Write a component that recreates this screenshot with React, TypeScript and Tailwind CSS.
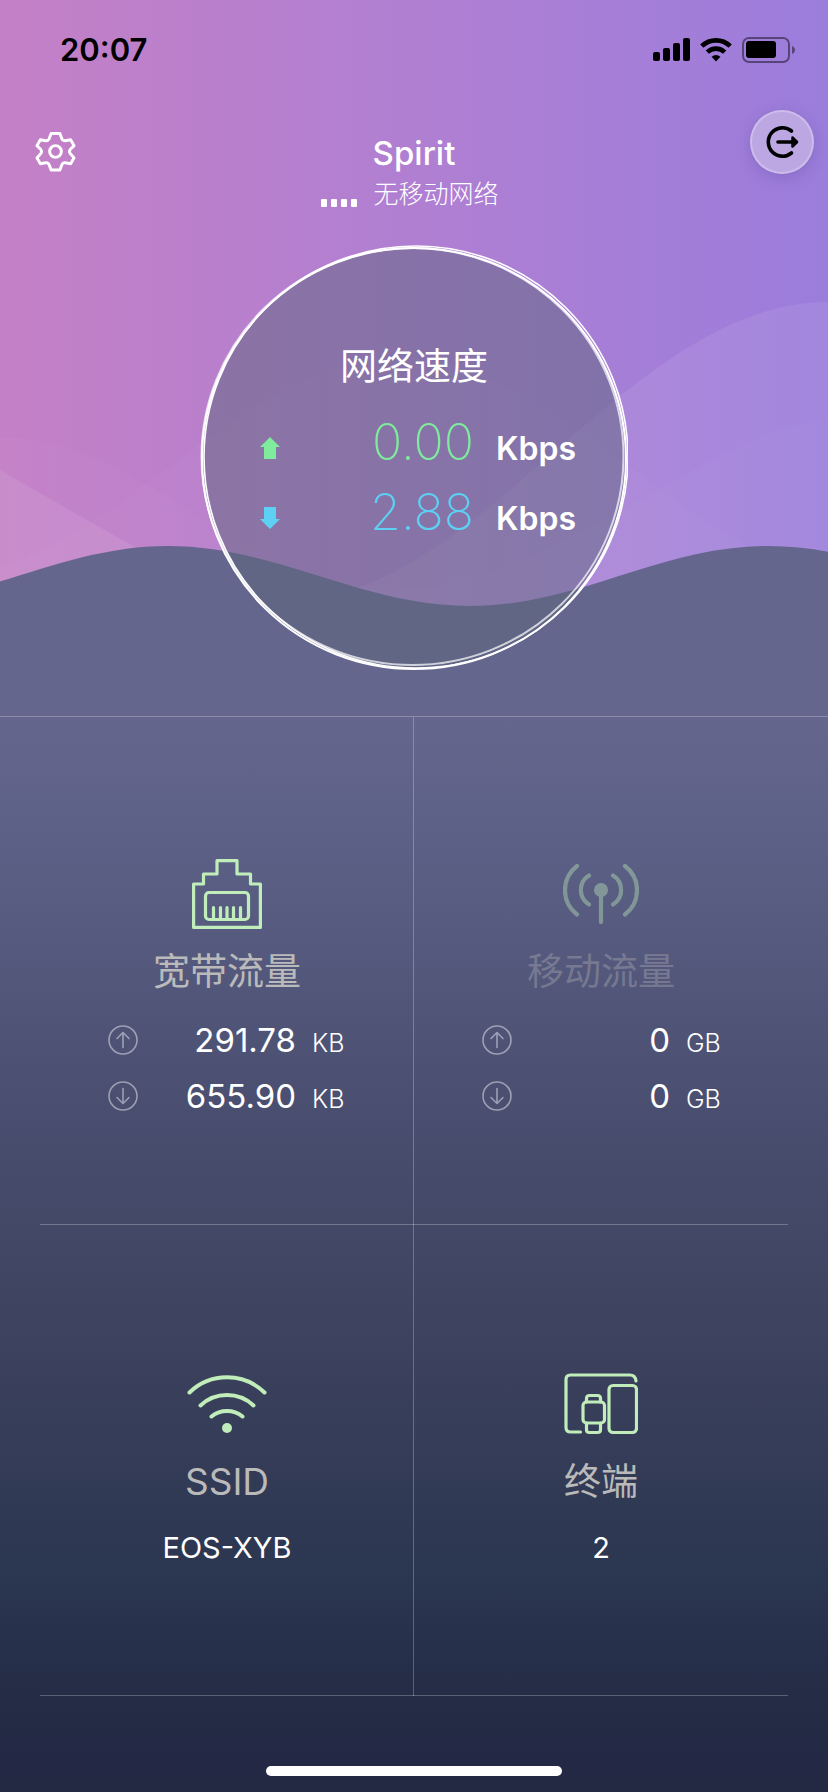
import { ReactNode } from "react";

const stroke = {
  fill: "none",
  stroke: "currentColor",
  strokeLinecap: "round" as const,
  strokeLinejoin: "round" as const,
};

function StatusBar() {
  return (
    <div className="flex h-[99px] items-center justify-between pr-8 pl-[60px] text-black">
      <span className="text-[31px] leading-10 font-semibold">20:07</span>
      <div className="flex items-center gap-[10px]">
        <svg width="37" height="24" viewBox="0 0 37 24" fill="currentColor">
          <rect x="0" y="14" width="7" height="9" rx="2" />
          <rect x="10" y="10" width="7" height="13" rx="2" />
          <rect x="20" y="5" width="7" height="18" rx="2" />
          <rect x="30" y="0" width="7" height="23" rx="2" />
        </svg>
        <svg width="32" height="24" viewBox="0 0 32 24" fill="none" stroke="currentColor" strokeWidth="4.6">
          <path d="M1.8 8.2a20.2 20.2 0 0 1 28.4 0" />
          <path d="M7.3 14.2a12.4 12.4 0 0 1 17.4 0" />
          <path d="M16 23.4l-4.4-4.6a6.2 6.2 0 0 1 8.8 0z" fill="currentColor" stroke="none" />
        </svg>
        <svg width="54" height="26" viewBox="0 0 54 26">
          <rect x="1" y="1" width="46" height="24" rx="6" fill="none" stroke="#000" strokeOpacity=".45" strokeWidth="2" />
          <rect x="4" y="4" width="30" height="17" rx="3" />
          <path d="M50 9c4 1.400 4 6.600 0 8z" fillOpacity=".45" />
        </svg>
      </div>
    </div>
  );
}

function Waves() {
  return (
    <svg className="absolute inset-0 h-full w-full" viewBox="0 0 828 716" preserveAspectRatio="none">
      <g fill="#fff">
        <path fillOpacity=".08" d="M0 470C45 496 90 522 135 547C190 576 240 600 290 600C480 600 628 302 828 302V716H0Z" />
        <path fillOpacity=".02" d="M0 437C142 437 248 590 390 590C560 590 714 419 840 419V716H0Z" />
        <path fillOpacity=".02" d="M-60 575C108 575 232 358 400 358C565 358 695 575 856 575V716H-60Z" />
      </g>
      <path
        d="M-132 606C-23 606 59 546 168 546S361 606 470 606S659 546 768 546S959 606 1068 606V716H-132Z"
        fill="#65668d"
      />
    </svg>
  );
}

function SpeedRow({ value, color, arrow }: { value: string; color: string; arrow: string }) {
  return (
    <div className={`flex h-[70px] items-baseline ${color}`}>
      <svg className="mt-3 self-center" width="20" height="22" viewBox="0 0 20 22" fill="currentColor">
        <path d={arrow} />
      </svg>
      <span className="flex-1 text-right text-[50px] leading-[70px] font-extralight">{value}</span>
      <span className="w-[102px] pl-[22px] text-[32px] font-semibold text-white">Kbps</span>
    </div>
  );
}

function SpeedDisc() {
  return (
    <div className="relative mx-auto size-[428px]">
      <svg className="absolute inset-0" width="428" height="428" viewBox="0 0 428 428" fill="none">
        <ellipse cx="213.500" cy="213.500" rx="212" ry="210" fill="#5d667d" fillOpacity=".5" />
        <g stroke="#fff">
          <ellipse cx="214" cy="214.500" rx="212" ry="210.500" strokeWidth="2" />
          <ellipse cx="212.500" cy="212.500" rx="211" ry="208.500" strokeWidth="2" strokeOpacity=".7" />
          <ellipse cx="216" cy="213" rx="212" ry="211" strokeWidth="1.600" />
        </g>
      </svg>
      <div className="relative pt-[97px]">
        <h2 className="text-center text-[37px] leading-[52px] font-normal text-white">网络速度</h2>
        <div className="mt-[14px] pr-[52px] pl-[60px]">
          <SpeedRow value="0.00" color="text-[#7eeb9d]" arrow="M10 0L20 10H16V22H4V10H0Z" />
          <SpeedRow value="2.88" color="text-[#5dd0f3]" arrow="M10 22L20 12H16V0H4V12H0Z" />
        </div>
      </div>
    </div>
  );
}

function UsageRow({ up, value, unit }: { up?: boolean; value: string; unit: string }) {
  return (
    <div className="flex h-14 items-baseline">
      <svg className="self-center text-white/45" width="30" height="30" viewBox="0 0 30 30" {...stroke} strokeWidth="1.600">
        <circle cx="15" cy="15" r="14" />
        <path d={up ? "M15 22.500V7.500M9 13.500L15 7.500L21 13.500" : "M15 7.500V22.500M9 16.500L15 22.500L21 16.500"} />
      </svg>
      <span className="flex-1 text-right text-[33px] leading-[56px]">{value}</span>
      <span className="w-[50px] pl-4 text-[25px] font-light">{unit}</span>
    </div>
  );
}

function Tile({ icon, title, dim, children }: { icon: ReactNode; title: string; dim?: boolean; children: ReactNode }) {
  return (
    <div className="flex flex-col items-center text-white">
      <div className={dim ? "flex h-[72px] items-center text-[#c0edb9] opacity-40" : "flex h-[72px] items-center text-[#c0edb9]"}>
        {icon}
      </div>
      <h3 className={dim ? "mt-4 text-[37px] leading-[52px] text-[#bababa]/35" : "mt-4 text-[37px] leading-[52px] text-[#bababa]"}>
        {title}
      </h3>
      {children}
    </div>
  );
}

const EthernetIcon = (
  <svg width="70" height="70" viewBox="0 0 70 70" {...stroke} strokeWidth="3.200">
    <path d="M1.600 68.400V25H11.500V15H25V1.600H45V15H58.500V25H68.400V68.400Z" />
    <rect x="13.500" y="33.500" width="43" height="27" rx="3.500" />
    <path d="M21.500 48.500V59M28.500 48.500V59M35 48.500V59M41.500 48.500V59M48.500 48.500V59" />
  </svg>
);

const AntennaIcon = (
  <svg width="76" height="60" viewBox="0 0 76 60" {...stroke} strokeWidth="4.200">
    <circle cx="38" cy="26" r="7" fill="currentColor" stroke="none" />
    <path d="M38 30V58M26 11.500A17 17 0 0 0 26 40.500M50 11.500A17 17 0 0 1 50 40.500M14 2A30.500 30.500 0 0 0 14 50.500M62 2A30.500 30.500 0 0 1 62 50.500" />
  </svg>
);

const WifiIcon = (
  <svg width="80" height="60" viewBox="0 0 80 60" {...stroke} strokeWidth="4">
    <path d="M2.500 18.500A54 54 0 0 1 77.500 18.500M13.500 31.500A39 39 0 0 1 66.500 31.500M24.500 42.500A25 25 0 0 1 55.500 42.500" />
    <circle cx="40" cy="54" r="5" fill="currentColor" stroke="none" />
  </svg>
);

const DevicesIcon = (
  <svg width="74" height="62" viewBox="0 0 74 62" {...stroke} strokeWidth="3.200">
    <path d="M72 8C71.500 4 69 2 66 2H6.500Q2 2 2 6.500V54.500Q2 59 6.500 59H16.500" />
    <rect x="45" y="12.500" width="27.500" height="47" rx="4" />
    <rect x="19" y="29" width="21.500" height="21" rx="3.500" />
    <path d="M22.500 29V25.500Q22.500 22.500 25.500 22.500H33.500Q36.500 22.500 36.500 25.500V29M22.500 50V57Q22.500 59.500 25.500 59.500H33.500Q36.500 59.500 36.500 57V50" />
  </svg>
);

export default function App() {
  return (
    <div className="relative flex min-h-screen flex-col bg-[#65668d] font-[Inter,'Noto_Sans_CJK_SC',sans-serif]">
      <header className="relative h-[716px] bg-linear-to-r from-[#c480c6] via-[#b07fd2] to-[#9b7ddc]">
        <Waves />
        <div className="relative">
          <StatusBar />
          <div className="grid h-[145px] grid-cols-[80px_1fr_80px] px-[34px] text-white">
            <button aria-label="Settings" className="mt-[30px] size-11">
              <svg width="43" height="43" viewBox="0 0 44 44" {...stroke} strokeWidth="3">
                <circle cx="22" cy="22" r="6" />
                <path d="M17.500 3.500H26.500L28.500 9Q29.500 11 32 11L37.500 10L41 16L37 20Q35.500 22 37 24L41 28.500L37.500 34.500L32 33.500Q29.500 33 28.500 35.500L26.500 41H17.500L15.500 35.500Q14.500 33 12 33.500L6.500 34.500L3 28.500L7 24Q8.500 22 7 20L3 16L6.500 10L12 11Q14.500 11 15.500 9Z" />
              </svg>
            </button>
            <div className="flex flex-col items-center">
              <h1 className="mt-[34px] text-[33px] leading-10 font-medium">Spirit</h1>
              <p className="flex items-center gap-4 pr-2 text-[25px] leading-[42px] font-light">
                <svg className="mt-[18px]" width="36" height="8" viewBox="0 0 36 8" fill="currentColor">
                  <rect x="0" width="6" height="8" rx="1" />
                  <rect x="10" width="6" height="8" rx="1" />
                  <rect x="20" width="6" height="8" rx="1" />
                  <rect x="30" width="6" height="8" rx="1" />
                </svg>
                无移动网络
              </p>
            </div>
          </div>
          <SpeedDisc />
        </div>
      </header>

      {/* floating exit button, sits above the header */}
      <button
        aria-label="Exit"
        className="absolute top-[110px] right-[14px] flex size-16 items-center justify-center rounded-full border-2 border-white/25 bg-[#bca7e3] text-black shadow-[0_4px_16px_rgba(60,40,120,0.2)]"
      >
        <svg width="34" height="34" viewBox="0 0 34 34" {...stroke} strokeWidth="3.600">
          <path d="M26.500 6A14.200 14.200 0 1 0 26.500 28M13 17H31" />
          <path d="M27.500 12.500L32 17L27.500 21.500Z" fill="currentColor" strokeWidth="2.500" />
        </svg>
      </button>

      <main className="flex-1 border-t border-white/25 bg-[linear-gradient(#65668d,#5c6086_12%,#484d6e_39%,#3d425e_58%,#2b3650_80%,#242c46_91%,#232843)] bg-origin-border">
        <div className="relative px-10">
          <div className="grid h-[508px] grid-cols-2 border-b border-white/25 pt-[141px]">
            <Tile icon={EthernetIcon} title="宽带流量">
              <div className="mt-[14px] w-[238px]">
                <UsageRow up value="291.78" unit="KB" />
                <UsageRow value="655.90" unit="KB" />
              </div>
            </Tile>
            <Tile icon={AntennaIcon} title="移动流量" dim>
              <div className="mt-[14px] w-[238px]">
                <UsageRow up value="0" unit="GB" />
                <UsageRow value="0" unit="GB" />
              </div>
            </Tile>
          </div>
          <div className="grid h-[471px] grid-cols-2 border-b border-white/25 pt-[143px]">
            <Tile icon={WifiIcon} title="SSID">
              <p className="mt-5 text-[29px] leading-10">EOS-XYB</p>
            </Tile>
            <Tile icon={DevicesIcon} title="终端">
              <p className="mt-5 text-[29px] leading-10">2</p>
            </Tile>
          </div>
          <div className="absolute inset-y-0 left-1/2 w-px -translate-x-px bg-white/25" />
        </div>
        <div className="mx-auto mt-[70px] mb-4 h-[10px] w-[296px] rounded-full bg-white" />
      </main>
    </div>
  );
}
